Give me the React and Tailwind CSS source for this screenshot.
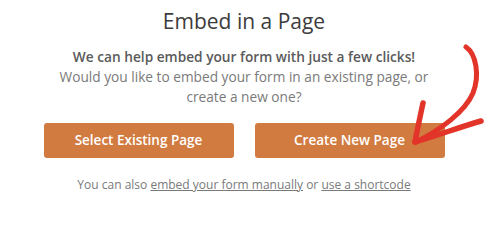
import React from 'react';

const Arrow = () => (
  <svg
    className="absolute left-[400px] top-[35px]"
    width="88"
    height="120"
    viewBox="0 0 88 120"
    fill="none"
  >
    <path
      d="M66 12 C76 19 80 40 73 58 C65 77 40 95 16 107"
      stroke="#e3342a"
      strokeWidth="5"
      strokeLinecap="round"
    />
    <path d="M23 68 C20 82 17 96 15 107" stroke="#e3342a" strokeWidth="5.5" strokeLinecap="round" />
    <path d="M81 86 C60 92 36 101 15 107" stroke="#e3342a" strokeWidth="5.5" strokeLinecap="round" />
  </svg>
);

const App = () => (
  <div
    className="relative w-[488px] h-[220px] bg-white overflow-hidden"
    style={{ fontFamily: '"Open Sans", "Noto Sans", sans-serif' }}
  >
    <div className="flex flex-col items-center pt-[7px]">
      <h1 className="text-[21px] leading-[28px] text-[#3c3c3c]">Embed in a Page</h1>
      <div className="mt-[12px] text-center text-[13.7px] leading-[20px]">
        <p className="font-semibold text-[#5a5a5a]">We can help embed your form with just a few clicks!</p>
        <p className="text-[#7a7a7a]">
          Would you like to embed your form in an existing page, or
          <br />
          create a new one?
        </p>
      </div>
      <div className="mt-[16px] flex gap-[21px]">
        <button className="w-[190px] h-[35px] rounded-[3px] bg-[#d27b41] text-white font-semibold text-[13.5px]">
          Select Existing Page
        </button>
        <button className="w-[190px] h-[35px] rounded-[3px] bg-[#d27b41] text-white font-semibold text-[13.5px]">
          Create New Page
        </button>
      </div>
      <p className="mt-[17px] text-[12px] leading-[20px] text-[#7a7a7a]">
        You can also <a className="underline">embed your form manually</a> or{' '}
        <a className="underline">use a shortcode</a>
      </p>
    </div>
    <Arrow />
  </div>
);

export default App;
